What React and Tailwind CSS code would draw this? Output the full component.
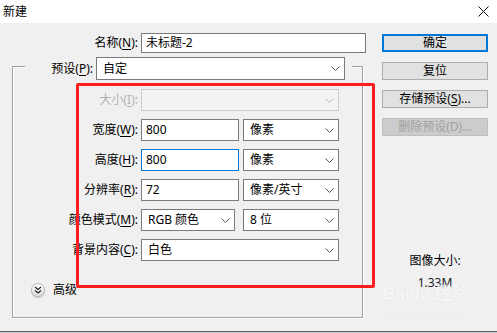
import React from "react";

const FONT = { fontFamily: '"Noto Sans", "Noto Sans CJK SC", sans-serif' };

function Chevron({ color = "#555" }) {
  return (
    <svg width="9" height="5" viewBox="0 0 9 5" className="shrink-0">
      <polyline points="0.5,0.5 4.5,4.5 8.5,0.5" fill="none" stroke={color} strokeWidth="1" />
    </svg>
  );
}

function Select({ w, h = "h-[22px]", children, disabled }) {
  return (
    <div
      className={`${w} ${h} flex items-center justify-between border ${
        disabled ? "border-[#cccccc] bg-[#f3f3f3]" : "border-[#7a7a7a] bg-white"
      } pl-[6px] pr-[4px]`}
    >
      <span className="text-[12px] leading-none text-black whitespace-nowrap">{children}</span>
      <Chevron color={disabled ? "#bbbbbb" : "#555"} />
    </div>
  );
}

function Input({ w, h = "h-[22px]", children, focused }) {
  return (
    <div
      className={`${w} ${h} flex items-center border ${
        focused ? "border-[#0078d7]" : "border-[#7a7a7a]"
      } bg-white pl-[4px]`}
    >
      <span className="text-[12px] leading-none text-black whitespace-nowrap">{children}</span>
    </div>
  );
}

function Label({ w, text, k, disabled }) {
  return (
    <div
      className={`${w} shrink-0 text-right text-[12px] leading-none whitespace-nowrap ${
        disabled ? "text-[#b0b0b0]" : "text-black"
      }`}
    >
      {text}(<span className="underline underline-offset-2">{k}</span>):
    </div>
  );
}

function Btn({ children, primary, disabled }) {
  return (
    <div
      className={`w-[106px] h-[18px] flex items-center justify-center text-[12px] leading-none whitespace-nowrap ${
        primary
          ? "border-2 border-[#0078d7] bg-[#e1e1e1] text-black"
          : disabled
          ? "border border-[#bfbfbf] bg-[#cccccc] text-[#a0a0a0]"
          : "border border-[#adadad] bg-[#e1e1e1] text-black"
      }`}
    >
      {children}
    </div>
  );
}

export default function App() {
  return (
    <div className="w-[497px] h-[333px] overflow-hidden bg-[#f0f0f0] flex flex-col" style={FONT}>
      {/* title bar */}
      <div className="h-[23px] bg-white flex items-center justify-between pl-[3px] pr-[8px] shrink-0">
        <span className="text-[12px] leading-none text-black">新建</span>
        <svg width="11" height="11" viewBox="0 0 11 11">
          <path d="M0.5 0.5 L10.5 10.5 M10.5 0.5 L0.5 10.5" stroke="#111" strokeWidth="1" />
        </svg>
      </div>

      {/* body */}
      <div className="relative h-[308px] flex shrink-0">
        {/* left */}
        <div className="w-[382px] flex flex-col shrink-0">
          <div className="mt-[10px] flex items-center">
            <Label w="w-[138px]" text="名称" k="N" />
            <div className="ml-[3px]">
              <Input w="w-[225px]" h="h-[20px]">未标题-2</Input>
            </div>
          </div>

          <div className="ml-[12px] mt-[13px] w-[351px] h-[252px] border border-[#a0a0a0] shadow-[inset_1px_1px_0_#fff,1px_1px_0_#fff] flex flex-col">
            <div className="-mt-[10px] ml-[12px] w-[327px] h-[23px] bg-[#f0f0f0] flex items-center">
              <Label w="w-[68px]" text="预设" k="P" />
              <div className="ml-[3px]">
                <Select w="w-[249px]" h="h-[23px]">自定</Select>
              </div>
            </div>

            <div className="mt-[9px] flex flex-col gap-[8px]">
              <div className="flex items-center">
                <Label w="w-[125px]" text="大小" k="I" disabled />
                <div className="ml-[3px]">
                  <Select w="w-[198px]" disabled>{""}</Select>
                </div>
              </div>
              <div className="flex items-center">
                <Label w="w-[125px]" text="宽度" k="W" />
                <div className="ml-[3px] flex gap-[4px]">
                  <Input w="w-[98px]">800</Input>
                  <Select w="w-[96px]">像素</Select>
                </div>
              </div>
              <div className="flex items-center">
                <Label w="w-[125px]" text="高度" k="H" />
                <div className="ml-[3px] flex gap-[4px]">
                  <Input w="w-[98px]" focused>800</Input>
                  <Select w="w-[96px]">像素</Select>
                </div>
              </div>
              <div className="flex items-center">
                <Label w="w-[125px]" text="分辨率" k="R" />
                <div className="ml-[3px] flex gap-[4px]">
                  <Input w="w-[98px]">72</Input>
                  <Select w="w-[96px]">像素/英寸</Select>
                </div>
              </div>
              <div className="flex items-center">
                <Label w="w-[125px]" text="颜色模式" k="M" />
                <div className="ml-[3px] flex gap-[8px]">
                  <Select w="w-[94px]">RGB 颜色</Select>
                  <Select w="w-[96px]">8 位</Select>
                </div>
              </div>
              <div className="flex items-center">
                <Label w="w-[125px]" text="背景内容" k="C" />
                <div className="ml-[3px]">
                  <Select w="w-[198px]">白色</Select>
                </div>
              </div>
            </div>

            <div className="mt-[22px] ml-[18px] flex items-center">
              <div className="w-[14px] h-[14px] rounded-full border border-[#b5b5b5] bg-gradient-to-b from-white to-[#dcdcdc] shadow-[0_1px_1px_rgba(0,0,0,0.2)] flex items-center justify-center">
                <svg width="8" height="8" viewBox="0 0 8 8">
                  <polyline points="1,1 4,3.5 7,1" fill="none" stroke="#222" strokeWidth="1.2" />
                  <polyline points="1,4.5 4,7 7,4.5" fill="none" stroke="#222" strokeWidth="1.2" />
                </svg>
              </div>
              <span className="ml-[8px] text-[12px] leading-none text-black">高级</span>
            </div>
          </div>
        </div>

        {/* right */}
        <div className="w-[106px] flex flex-col shrink-0">
          <div className="mt-[11px] flex flex-col gap-[10px]">
            <Btn primary>确定</Btn>
            <Btn>复位</Btn>
            <Btn>
              存储预设(<span className="underline underline-offset-2">S</span>)...
            </Btn>
            <Btn disabled>删除预设(D)...</Btn>
          </div>
          <div className="mt-[118px] flex flex-col items-center">
            <span className="text-[12px] leading-[14px] text-black">图像大小:</span>
            <span className="mt-[8px] text-[12px] leading-[14px] text-[#1a1a2a]">1.33M</span>
          </div>
        </div>

        {/* watermark */}
        <div className="absolute left-[383px] top-[262px] flex flex-col items-start pointer-events-none opacity-70">
          <span
            className="text-[17px] font-bold leading-none text-[#fafafa]"
            style={{ fontFamily: '"Liberation Sans", "Noto Sans CJK SC", sans-serif', textShadow: "0 0 1px #d4d4d4" }}
          >
            Baidu 经验
          </span>
          <span
            className="mt-[7px] text-[11px] leading-none text-[#fafafa]"
            style={{ fontFamily: '"Liberation Serif", serif', textShadow: "0 0 1px #d4d4d4" }}
          >
            jingyan.baidu.com
          </span>
        </div>

        {/* red highlight */}
        <div className="absolute left-[76px] top-[60px] w-[299px] h-[205px] border-[3px] border-[#ff1e1e] rounded-[2px] pointer-events-none" />
      </div>

      <div className="h-[1px] bg-[#5a5a5a] shrink-0" />
      <div className="h-[1px] bg-[#c9d3dc] shrink-0" />
    </div>
  );
}
